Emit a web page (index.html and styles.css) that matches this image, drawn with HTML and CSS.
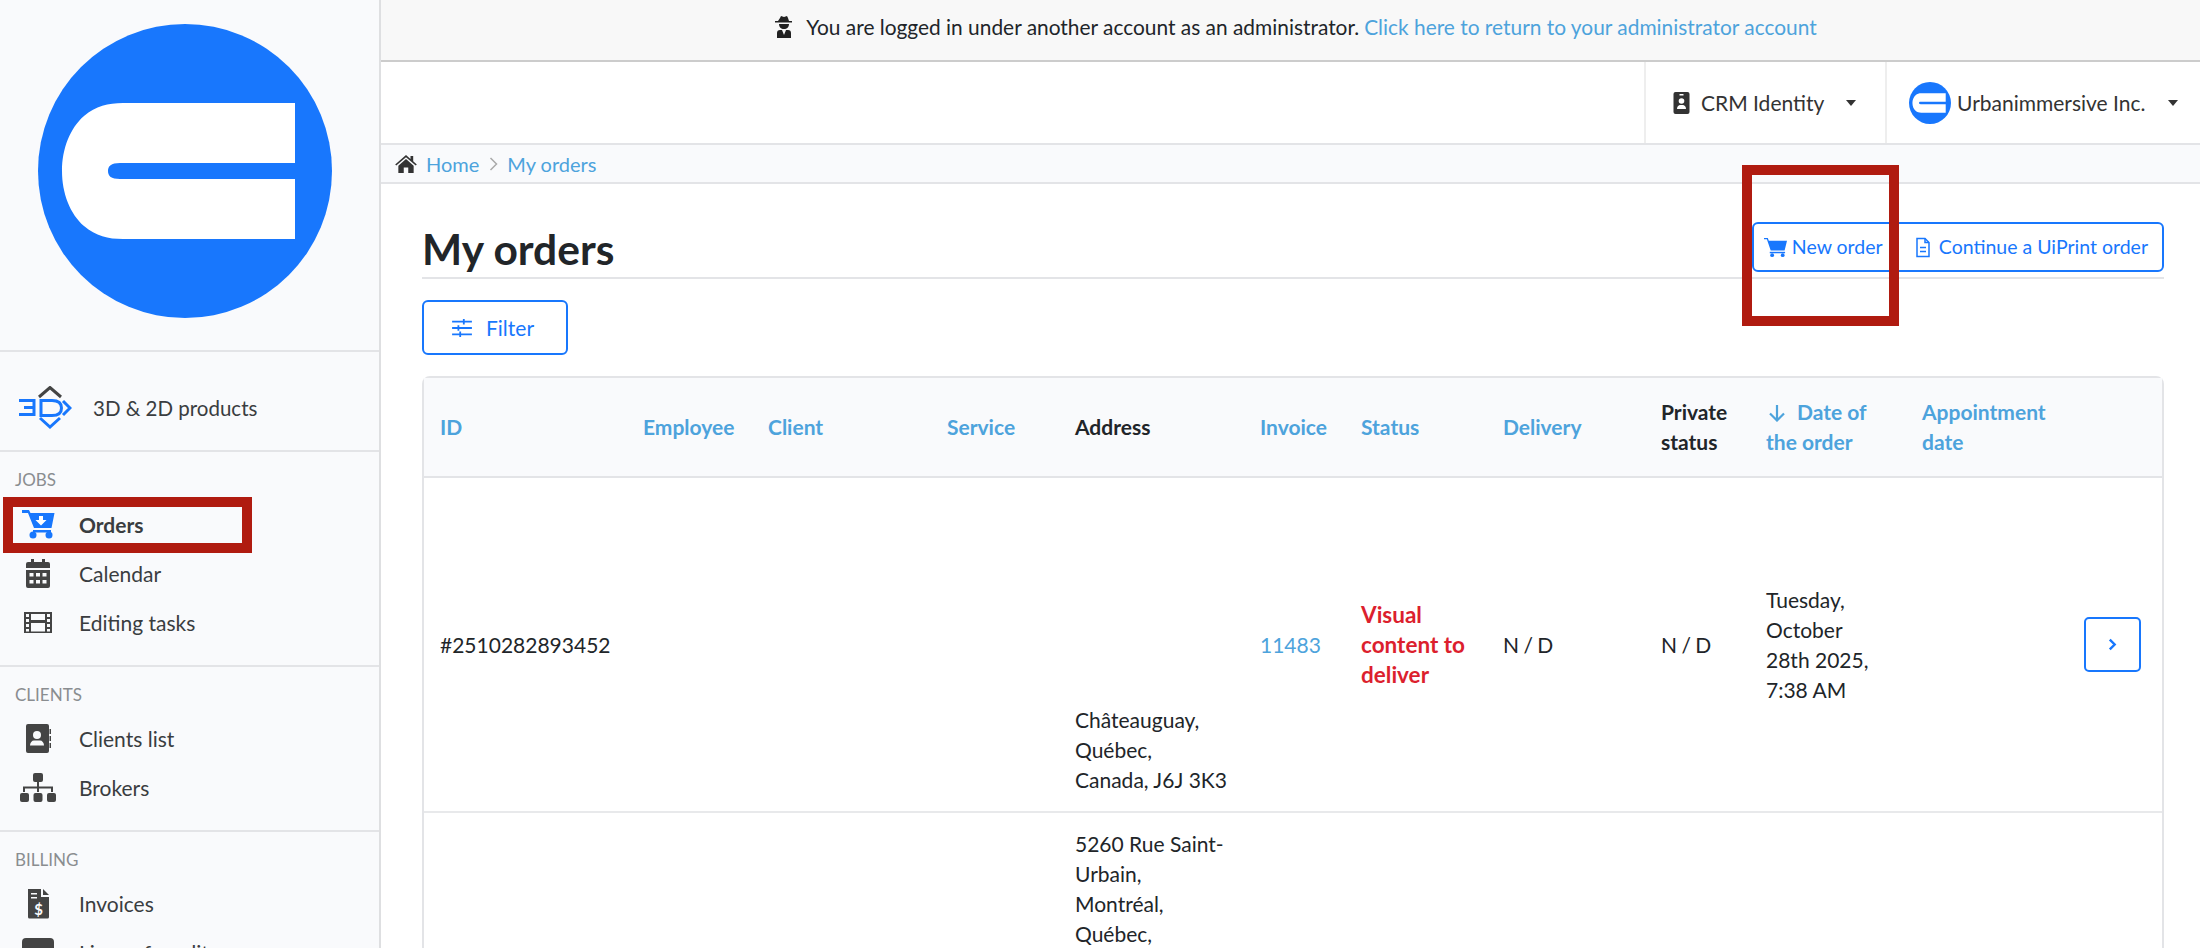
FILE: index.html
```html
<!DOCTYPE html>
<html lang="en">
<head>
<meta charset="utf-8">
<title>My orders</title>
<link rel="stylesheet" href="styles.css">
</head>
<body>
<div class="app">
  <aside class="sidebar">
    <div class="logo-box">
      <svg class="logo" viewBox="0 0 294 294"><circle cx="147" cy="147" r="147" fill="#1877fd"/><path d="M257 79H85C70 79 58 82 46 92 32 104 24 125 24 147s8 43 22 55c12 10 24 13 39 13H257V155H82c-9 0-12-3-12-8s3-8 12-8H257z" fill="#fff"/></svg>
    </div>
    <a class="product-row">
      <svg class="icon-3d" viewBox="0 0 54 44"><path d="M21 11 32 1.500 43 11" fill="none" stroke="#444" stroke-width="3"/><path d="M1 14.500H16V21.500H6M16 21.500V28.500H1M23 14.500H34Q43.500 14.500 43.500 22T34 29.500H23zM45 15l7 7-7 7M22 32l10 9 10-9" fill="none" stroke="#1877fd" stroke-width="3"/></svg>
      <span>3D &amp; 2D products</span>
    </a>
    <section class="nav-group jobs">
      <h6>JOBS</h6>
      <a class="nav-item active">
        <svg class="ico" viewBox="0 0 36 30"><path d="M2 0h7l1.500 3H34.500l-3 15H14L8 3H2z" fill="#1877fd"/><path d="M13 20h18v2.500H13z" fill="#1877fd"/><circle cx="13" cy="25" r="3.500" fill="#1877fd"/><circle cx="29" cy="25" r="3.500" fill="#1877fd"/><path d="M19 6h4v4h3.500L21 15.500 15.500 10H19z" fill="#fff"/></svg>
        <span>Orders</span>
      </a>
      <a class="nav-item">
        <svg class="ico" viewBox="0 0 36 30"><path d="M11 0h3v4h-3zM22 0h3v4h-3zM8 3h20a2 2 0 0 1 2 2v4H6V5a2 2 0 0 1 2-2zM6 11h24v16a2 2 0 0 1-2 2H8a2 2 0 0 1-2-2z" fill="#444"/><path d="M9.500 14h4v3.500h-4zM16 14h4v3.500h-4zM22.500 14h4v3.500h-4zM9.500 21h4v3.500h-4zM16 21h4v3.500h-4zM22.500 21h4v3.500h-4z" fill="#f9fafc"/></svg>
        <span>Calendar</span>
      </a>
      <a class="nav-item">
        <svg class="ico" viewBox="0 0 36 30"><path fill-rule="evenodd" d="M4 4h28v21H4zM6 6v3h3V6zM6 11v3h3v-3zM6 16v3h3v-3zM6 21v2.500h3V21zM27 6v3h3V6zM27 11v3h3v-3zM27 16v3h3v-3zM27 21v2.500h3V21zM11 6v6h14V6zM11 15v8.500h14V15z" fill="#444"/></svg>
        <span>Editing tasks</span>
      </a>
    </section>
    <section class="nav-group">
      <h6>CLIENTS</h6>
      <a class="nav-item">
        <svg class="ico" viewBox="0 0 36 30"><path d="M8 0h19a2 2 0 0 1 2 2v25a2 2 0 0 1-2 2H8a2 2 0 0 1-2-2V2a2 2 0 0 1 2-2zM29.500 5h1.500v5h-1.500zM29.500 12h1.500v5h-1.500zM29.500 19h1.500v5h-1.500z" fill="#444"/><circle cx="17" cy="11" r="4" fill="#f9fafc"/><path d="M10 21.500c0-3 2-5 4-5h6c2 0 4 2 4 5z" fill="#f9fafc"/></svg>
        <span>Clients list</span>
      </a>
      <a class="nav-item">
        <svg class="ico" viewBox="0 0 36 30"><rect x="13" y="0" width="10" height="9" rx="2" fill="#444"/><rect x="0" y="20" width="9" height="9" rx="2" fill="#444"/><rect x="13.500" y="20" width="9" height="9" rx="2" fill="#444"/><rect x="27" y="20" width="9" height="9" rx="2" fill="#444"/><path d="M17 9h2v4.500h14V19h-2v-3.500H19V19h-2v-3.500H5V19H3v-5.500h14z" fill="#444"/></svg>
        <span>Brokers</span>
      </a>
    </section>
    <section class="nav-group">
      <h6>BILLING</h6>
      <a class="nav-item">
        <svg class="ico" viewBox="0 0 36 30"><path d="M8 0h13v8h8v20a1.500 1.500 0 0 1-1.500 1.500h-18A1.500 1.500 0 0 1 8 28z" fill="#444"/><path d="M23 0l6 6h-6z" fill="#444"/><path d="M11 4h6v1.500h-6zM11 8h6v1.500h-6z" fill="#f9fafc"/><text class="ico-dollar" x="18.500" y="26">$</text></svg>
        <span>Invoices</span>
      </a>
      <a class="nav-item">
        <svg class="ico" viewBox="0 0 36 30"><rect x="2" y="0" width="32" height="28" rx="4" fill="#444"/></svg>
        <span>Lines of credit</span>
      </a>
    </section>
  </aside>

  <main class="main">
    <div class="banner">
      <svg class="spy" viewBox="0 0 20 22"><path d="M6 2l1-2 3 1 3-1 1 2 1 3h3v1.500H1V5h3zM5 8h10c0 3-2 5-5 5S5 11 5 8zM3 22v-5c0-2 1-3 3-3h8c2 0 3 1 3 3v5z" fill="#222"/><path d="M8 14l2 5 2-5z" fill="#f8f8f8"/></svg>
      <span>You are logged in under another account as an administrator.</span>
      <a class="link">Click here to return to your administrator account</a>
    </div>

    <header class="topbar">
      <div class="top-menu">
        <svg class="badge" viewBox="0 0 16 22"><path d="M2 0h12a2 2 0 0 1 2 2v18a2 2 0 0 1-2 2H2a2 2 0 0 1-2-2V2a2 2 0 0 1 2-2z" fill="#333"/><path d="M6 2h4v1.500H6zM3.500 17c0-3 2-4 3-4h3c1 0 3 1 3 4z" fill="#fff"/><circle cx="8" cy="9" r="2.800" fill="#fff"/></svg>
        <span>CRM Identity</span>
        <i class="caret"></i>
      </div>
      <div class="top-menu company">
        <svg class="avatar" viewBox="0 0 294 294"><circle cx="147" cy="147" r="147" fill="#1877fd"/><path d="M257 79H85C70 79 58 82 46 92 32 104 24 125 24 147s8 43 22 55c12 10 24 13 39 13H257V155H82c-9 0-12-3-12-8s3-8 12-8H257z" fill="#fff"/></svg>
        <span>Urbanimmersive Inc.</span>
        <i class="caret"></i>
      </div>
    </header>

    <nav class="crumbs">
      <svg class="home" viewBox="0 0 24 20"><path d="M12 0 0 10.500l1.200 1.300L12 2.500l10.800 9.300 1.200-1.300L20 7V1h-3v3.400z" fill="#333"/><path d="M12 4.500 3.500 12v8h6v-6h5v6h6v-8z" fill="#333"/></svg>
      <a class="link">Home</a>
      <svg class="sep" viewBox="0 0 8 14"><path d="M1 1l6 6-6 6" fill="none" stroke="#aaa" stroke-width="1.500"/></svg>
      <a class="link">My orders</a>
    </nav>

    <div class="content">
      <div class="page-head">
        <h1>My orders</h1>
        <div class="btn-group">
          <a class="btn-seg seg-new">
            <svg class="cart" viewBox="0 0 24 20"><path d="M0 0h4l1 3h19l-2.500 10H7L3 1.500H0z" fill="#1877fd"/><path d="M6 14.500h16v1.500H6z" fill="#1877fd"/><circle cx="8.500" cy="18" r="2" fill="#1877fd"/><circle cx="19.500" cy="18" r="2" fill="#1877fd"/></svg>
            <span>New order</span>
          </a>
          <a class="btn-seg seg-uiprint">
            <svg class="doc" viewBox="0 0 14 20"><path d="M1 1h8l4 4v14H1z" fill="none" stroke="#1877fd" stroke-width="1.500"/><path d="M9 1v4h4M4 10h6M4 14h6" fill="none" stroke="#1877fd" stroke-width="1.500"/></svg>
            <span>Continue a UiPrint order</span>
          </a>
        </div>
      </div>

      <button class="filter" type="button">
        <svg class="sliders" viewBox="0 0 22 20"><path d="M0 3h22M0 10h22M0 17h22" stroke="#1877fd" stroke-width="2"/><path d="M13 0v6M7 7v6M9 14v6" stroke="#1877fd" stroke-width="2"/></svg>
        <span>Filter</span>
      </button>

      <div class="table-card">
        <table class="orders">
          <colgroup>
            <col class="c-id"><col class="c-emp"><col class="c-cli"><col class="c-svc"><col class="c-adr"><col class="c-inv"><col class="c-sta"><col class="c-del"><col class="c-pri"><col class="c-dat"><col class="c-app"><col class="c-act">
          </colgroup>
          <thead>
            <tr>
              <th class="link">ID</th>
              <th class="link">Employee</th>
              <th class="link">Client</th>
              <th class="link">Service</th>
              <th>Address</th>
              <th class="link">Invoice</th>
              <th class="link">Status</th>
              <th class="link">Delivery</th>
              <th>Private status</th>
              <th class="link"><svg class="arrow" viewBox="0 0 18 18"><path d="M9 1v15.500M2 9.500l7 7 7-7" fill="none" stroke="#4da3dc" stroke-width="2.200"/></svg>Date of<br>the order</th>
              <th class="link">Appointment date</th>
              <th></th>
            </tr>
          </thead>
          <tbody>
            <tr class="row-one">
              <td>#2510282893452</td>
              <td></td><td></td><td></td>
              <td class="addr">Châteauguay,<br>Québec,<br>Canada, J6J 3K3</td>
              <td><a class="link">11483</a></td>
              <td class="status">Visual<br>content to<br>deliver</td>
              <td class="nd">N / D</td>
              <td class="nd">N / D</td>
              <td>Tuesday,<br>October<br>28th 2025,<br>7:38 AM</td>
              <td></td>
              <td class="act"><button class="chev" type="button"><svg viewBox="0 0 8 12"><path d="M1.500 1.500 6 6l-4.500 4.500" fill="none" stroke="#1877fd" stroke-width="2.200"/></svg></button></td>
            </tr>
            <tr class="row-two">
              <td></td><td></td><td></td><td></td>
              <td class="addr-top">5260 Rue Saint-Urbain,<br>Montréal,<br>Québec,</td>
              <td></td><td></td><td></td><td></td><td></td><td></td><td></td>
            </tr>
          </tbody>
        </table>
      </div>
    </div>
  </main>
</div>

<div class="mark mark-orders"></div>
<div class="mark mark-new"></div>
</body>
</html>
```

FILE: styles.css
```css
* { box-sizing: border-box; }
html, body { margin: 0; height: 100%; overflow: hidden; }
body { font-family: Lato, "Liberation Sans", sans-serif; font-size: 21px; line-height: 30px; color: #212529; background: #fff; position: relative; }
.app { display: flex; height: 948px; overflow: hidden; }
.link { color: #4da3dc; text-decoration: none; }

.sidebar { flex: 0 0 381px; height: 948px; background: #f9fafc; border-right: 2px solid #dedfe1; color: #3a3d40; overflow: hidden; }
.logo-box { height: 352px; padding: 24px 0 0 38px; border-bottom: 2px solid #e3e4e7; }
.logo { display: block; width: 294px; height: 294px; }
.product-row { display: flex; align-items: center; height: 100px; padding: 14px 0 0 18px; gap: 21px; font-size: 20.500px; border-bottom: 2px solid #e3e4e7; }
.icon-3d { width: 54px; height: 44px; flex: none; }
.nav-group { padding: 13px 0 18px; border-bottom: 2px solid #e3e4e7; }
.nav-group h6 { margin: 0 0 4px; padding-left: 15px; font-size: 17px; line-height: 30px; font-weight: 400; color: #8a8d90; }
.jobs h6 { margin-bottom: 5px; }
.nav-item { display: flex; align-items: center; height: 49px; padding-left: 20px; }
.nav-item .ico { flex: none; width: 36px; height: 30px; margin-right: 23px; }
.nav-item.active { font-weight: 700; }
.ico-dollar { font-size: 15px; font-weight: 700; fill: #f9fafc; text-anchor: middle; font-family: Lato, sans-serif; }

.main { flex: 1; min-width: 0; display: flex; flex-direction: column; }
.banner { height: 62px; flex: none; display: flex; align-items: center; justify-content: center; gap: 5px; font-size: 20.900px; background: #f8f8f8; border-bottom: 2px solid #ccc; padding: 0 0 6px 10px; }
.spy { width: 20px; height: 22px; margin-right: 7px; }
.topbar { height: 83px; flex: none; display: flex; justify-content: flex-end; border-bottom: 2px solid #e3e4e7; }
.top-menu { display: flex; align-items: center; border-left: 2px solid #eee; color: #333; }
.top-menu:first-child { width: 241px; padding-left: 27px; }
.badge { width: 17px; height: 22px; margin-right: 11px; }
.company { width: 315px; padding-left: 22px; }
.avatar { width: 42px; height: 42px; margin-right: 6px; }
.caret { width: 0; height: 0; margin-left: 22px; border-left: 5.500px solid transparent; border-right: 5.500px solid transparent; border-top: 6px solid #333; }
.crumbs { height: 39px; flex: none; display: flex; align-items: center; padding-left: 14px; font-size: 20px; background: #f9fafc; border-bottom: 2px solid #e3e4e7; }
.home { width: 22px; height: 18px; margin-right: 9px; }
.sep { width: 9px; height: 14px; margin: 0 9.500px; }

.content { flex: 1; padding: 0 36px 0 41px; min-height: 0; }
.page-head { display: flex; justify-content: space-between; align-items: flex-end; height: 95px; padding-bottom: 5px; border-bottom: 2px solid #e3e4e7; }
h1 { margin: 0 0 -7px; font-size: 42.500px; line-height: 60px; font-weight: 700; color: #212529; }
.btn-group { display: flex; height: 50px; border: 2px solid #1877fd; border-radius: 6px; color: #1877fd; }
.btn-seg { display: flex; align-items: center; font-size: 19.500px; white-space: nowrap; color: #1877fd; }
.seg-new { width: 137px; padding-left: 10px; }
.seg-uiprint { padding: 0 14px 0 25px; }
.cart { width: 23px; height: 21px; margin-right: 5px; flex: none; }
.doc { width: 14px; height: 21px; margin-right: 9px; flex: none; }
.filter { display: flex; align-items: center; width: 146px; height: 55px; margin-top: 21px; padding: 0 0 0 27px; font: inherit; color: #1877fd; background: #fff; border: 2px solid #1877fd; border-radius: 6px; }
.sliders { width: 22px; height: 18px; margin-right: 13px; }

.table-card { margin-top: 21px; border: 2px solid #e3e4e7; border-bottom: 0; border-radius: 8px 8px 0 0; }
.orders { width: 100%; table-layout: fixed; border-collapse: collapse; }
.c-id { width: 203px; } .c-emp { width: 125px; } .c-cli { width: 179px; } .c-svc { width: 128px; } .c-adr { width: 185px; } .c-inv { width: 101px; } .c-sta { width: 142px; } .c-del { width: 158px; } .c-pri { width: 105px; } .c-dat { width: 156px; } .c-app { width: 150px; } .c-act { width: auto; }
th, td { padding: 0 14px 0 16px; vertical-align: middle; text-align: left; }
thead tr { height: 99px; background: #f9fafc; }
th { font-weight: 700; border-bottom: 2px solid #e3e4e7; }
.arrow { display: inline-block; width: 18px; height: 18px; margin: 0 11px 0 2px; vertical-align: -2px; }
.row-one { height: 335px; border-bottom: 2px solid #e8e9eb; }
.addr { vertical-align: bottom; padding-bottom: 16px; }
.addr-top { vertical-align: top; padding-top: 16px; height: 400px; }
.status { color: #dc1f2e; font-weight: 700; font-size: 22.500px; }
.nd { word-spacing: -1px; }
.act { padding: 0 21px 0 0; text-align: right; }
.chev { width: 57px; height: 55px; padding: 0; background: #fff; border: 2px solid #1877fd; border-radius: 5px; display: inline-flex; align-items: center; justify-content: center; }
.chev svg { width: 9px; height: 13px; }

.mark { position: absolute; border: 10px solid #b01b10; pointer-events: none; }
.mark-orders { left: 3px; top: 497px; width: 249px; height: 56px; }
.mark-new { left: 1742px; top: 165px; width: 157px; height: 161px; }
```
